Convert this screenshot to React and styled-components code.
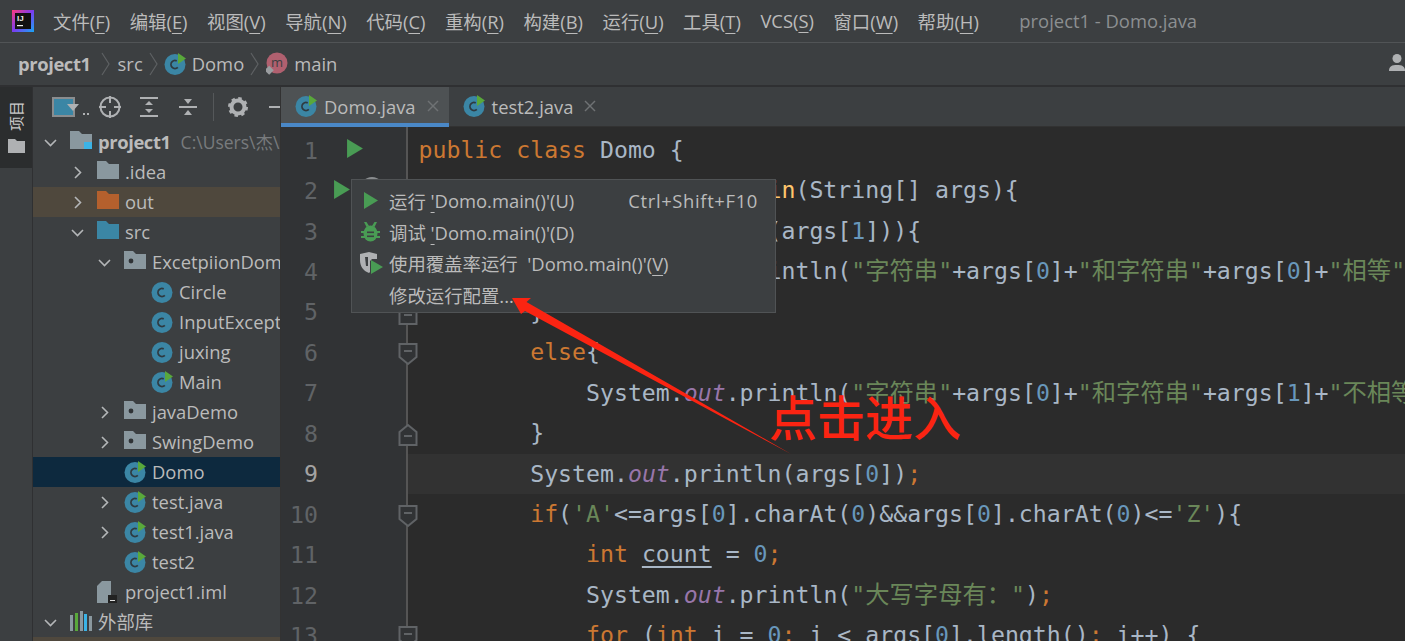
import React from "react";
import styled, { createGlobalStyle } from "styled-components";

const Global = createGlobalStyle`
  html, body { margin: 0; padding: 0; background: #3c3f41; overflow: hidden; }
  * { box-sizing: border-box; }
`;
const UI = `"Open Sans", "Noto Sans CJK SC", sans-serif`;
const MONO = `"DejaVu Sans Mono", "Noto Sans CJK SC", monospace`;

const Page = styled.div`
  width: 1405px; height: 641px; position: relative; overflow: hidden;
  display: flex; flex-direction: column; background: #3c3f41; color: #bbbbbb;
  font-family: ${UI}; font-size: 18.4px;
`;
const MenuBar = styled.div`
  height: 43px; flex: none; display: flex; align-items: center; padding: 0 0 1px 12px;
  border-bottom: 1px solid #515456;
`;
const LogoSlot = styled.div`width: 22px; height: 22px; margin-right: 19px; flex: none; display: flex;`;
const MenuEntry = styled.span`margin-right: 19.5px; white-space: pre;`;
const Title = styled.span`margin-left: 21px; color: #8c8f91; white-space: pre;`;
const Crumbs = styled.div`
  height: 44px; flex: none; display: flex; align-items: center; padding: 0 0 1px 18px;
  border-bottom: 2px solid #2f3032; position: relative;
`;
const Crumb = styled.span`font-weight: ${p => (p.$bold ? 700 : 400)}; letter-spacing: ${p => (p.$bold ? "-0.4px" : 0)}; white-space: pre;`;
const CrumbSep = styled.svg`width: 9px; height: 24px; flex: none; margin-left: ${p => p.$l}px; margin-right: ${p => p.$r}px;`;
const CrumbIcon = styled.span`display: flex; margin-right: 6px;`;
const UserIcon = styled.svg`position: absolute; right: -4px; top: 10px; width: 20px; height: 20px;`;
const Body = styled.div`flex: 1; display: flex; min-height: 0;`;
const Stripe = styled.div`width: 33px; flex: none; border-right: 1px solid #2f3032;`;
const StripeButton = styled.div`
  height: 81px; width: 32px; background: #2b2d2e; display: flex; flex-direction: column;
  align-items: center; padding-top: 14px; gap: 8px;
`;
const StripeLabel = styled.span`
  writing-mode: vertical-rl; text-orientation: sideways; transform: rotate(180deg);
  font-size: 15px; line-height: 16px; color: #c9c9c9;
`;
const Panel = styled.div`
  width: 248px; flex: none; display: flex; flex-direction: column; border-right: 1px solid #323232;
`;
const PanelTools = styled.div`height: 40px; flex: none; display: flex; align-items: center; padding-left: 19px; overflow: hidden;`;
const ToolIcon = styled.svg`flex: none; margin-right: ${p => p.$mr || 0}px;`;
const ToolSep = styled.div`width: 1px; height: 28px; background: #55585a; flex: none; margin: 0 14px 0 16px;`;
const Tree = styled.div`flex: 1; overflow: hidden;`;
const Row = styled.div`
  height: 30px; display: flex; align-items: center; white-space: nowrap; overflow: hidden;
  padding-left: ${p => 4 + p.$level * 27}px;
  background: ${p => (p.$selected ? "#0d293e" : p.$tint ? "#4f483d" : "transparent")};
`;
const ChevronSlot = styled.span`width: 33px; height: 30px; flex: none; display: flex; align-items: center; padding-left: 7px;`;
const IconSlot = styled.span`width: 28px; height: 22px; flex: none; display: flex;`;
const RowName = styled.span`font-weight: ${p => (p.$bold ? 700 : 400)}; letter-spacing: ${p => (p.$bold ? "-0.4px" : 0)}; white-space: pre; margin-bottom: 2px;`;
const RowHint = styled.span`color: #787b7d; margin-left: 10px; white-space: pre; font-size: 17.5px; margin-bottom: 2px;`;
const Editor = styled.div`flex: 1; min-width: 0; display: flex; flex-direction: column;`;
const Tabs = styled.div`height: 40px; flex: none; display: flex; background: #3c3f41; border-bottom: 1px solid #323232;`;
const Tab = styled.div`
  height: 40px; display: flex; align-items: center; padding: 2px 9px 0 14px; white-space: pre;
  background: ${p => (p.$active ? "#4e5254" : "transparent")};
  border-bottom: 4px solid ${p => (p.$active ? "#4a88c7" : "transparent")};
`;
const TabIcon = styled.span`display: flex; margin-right: 7px;`;
const TabClose = styled.svg`width: 14px; height: 14px; margin-left: 10px; flex: none;`;
const Code = styled.div`flex: 1; display: flex; background: #2b2b2b; overflow: hidden; padding-top: 3px; position: relative;
  font-family: ${MONO}; font-size: 23.2px;`;
const Gutter = styled.div`
  width: 127px; flex: none; background: #313335; margin-top: -3px; padding-top: 3px;
  border-right: 2px solid #555555; height: calc(100% + 3px);
`;
const GutterRow = styled.div`height: 40.45px; display: flex; align-items: center;`;
const LineNo = styled.span`width: 37px; flex: none; text-align: right; color: ${p => (p.$current ? "#a4a3a3" : "#606366")};`;
const RunCell = styled.span`width: 80px; flex: none; display: flex; align-items: center; padding-left: ${p => p.$pad || 0}px; padding-bottom: 3px;`;
const OverrideMark = styled.svg`width: 24px; height: 24px; flex: none; margin-left: 10px;`;
const FoldMark = styled.svg`width: 20px; height: 24px; flex: none; margin-top: 4px; position: relative; z-index: 1;`;
const Lines = styled.div`flex: 1; min-width: 0; white-space: pre;`;
const Line = styled.div`
  height: 40.45px; line-height: 40.45px; padding-left: 10.5px; color: #a9b7c6;
  background: ${p => (p.$current ? "#323232" : "transparent")};
`;
const K = styled.span`color: #cc7832;`;
const S = styled.span`color: #6a8759;`;
const Han = styled.span`font-size: 24.3px;`;
const N = styled.span`color: #6897bb;`;
const F = styled.span`color: #9876aa; font-style: italic;`;
const M = styled.span`color: #ffc66d;`;
const Und = styled.span`text-decoration: underline; text-underline-offset: 4px;`;
const Popup = styled.div`
  position: absolute; left: 351px; top: 179px; width: 425px; height: 134px; z-index: 3;
  background: #3c3f41; border: 1.5px solid #505355; padding-top: 5px;
`;
const PopupItem = styled.div`height: 31.4px; display: flex; align-items: center; white-space: pre; color: #bbbbbb; padding-right: 17px;`;
const PopupIcon = styled.span`width: 37px; flex: none; display: flex; justify-content: center;`;
const Shortcut = styled.span`margin-left: auto; letter-spacing: 0.65px;`;
const ArrowLayer = styled.svg`position: absolute; left: 0; top: 0; width: 1405px; height: 641px; z-index: 4; pointer-events: none;`;
const Note = styled.div`
  position: absolute; left: 769px; top: 381px; z-index: 5; color: #fb2412; white-space: pre;
  font-family: "Noto Sans CJK SC", sans-serif; font-weight: 500; font-size: 48px; line-height: 68px;
`;

const ClassIcon = ({ play, size = 22 }) => (
  <svg width={size} height={size} viewBox="0 0 22 22">
    <circle cx="11" cy="11.5" r="10.5" fill="#3b86a5" />
    <circle cx="11" cy="11.5" r="4" fill="none" stroke="#2f3a40" strokeWidth="1.8" strokeDasharray="17 8" transform="rotate(45 11 11.5)" />
    {play && <polygon points="14,0 22,5.5 14,11" fill="#59a83b" />}
  </svg>
);
const Chevron = ({ open }) => (
  <svg width="13" height="13" viewBox="0 0 13 13" fill="none" stroke="#b4b6b8" strokeWidth="1.6">
    {open ? <polyline points="1,4 6.5,9.5 12,4" /> : <polyline points="4,1 9.5,6.5 4,12" />}
  </svg>
);
const Folder = ({ color = "#8a989f", badge, pkg }) => (
  <svg width="22" height="18" viewBox="0 0 22 18">
    <path d="M0 0h9l3 3h10v15H0z" fill={color} />
    {pkg && <circle cx="7" cy="10" r="2.4" fill="#2f3336" />}
    {badge && <rect x="14" y="11" width="9" height="9" fill="#3bb3e6" />}
  </svg>
);
const Play = ({ size = 18 }) => (
  <svg width={size - 3} height={size} viewBox="0 0 15 18"><polygon points="0,0 15,9 0,18" fill="#499c54" /></svg>
);
const Bug = () => (
  <svg width="19" height="20" viewBox="0 0 19 20" fill="#499c54">
    <ellipse cx="9.5" cy="11.5" rx="7" ry="8" />
    <rect x="0" y="9" width="19" height="2" /><rect x="0" y="14" width="19" height="2" />
    <polygon points="3,0 5.5,0 8,4 5.5,5" /><polygon points="16,0 13.5,0 11,4 13.5,5" />
    <rect x="6" y="9.5" width="7" height="1.6" fill="#3c3f41" /><rect x="6" y="13.5" width="7" height="1.6" fill="#3c3f41" />
  </svg>
);
const Coverage = () => (
  <svg width="24" height="24" viewBox="0 0 24 24">
    <path d="M1 3l9-2 8 2v5h-5l-2 2v11l-1 1C4 20 1 15 1 9z" fill="#afb1b3" />
    <path d="M6 6h3v9H7z" fill="#3c3f41" />
    <polygon points="12,9 24,16 12,23" fill="#499c54" />
  </svg>
);

const Fold = ({ kind }) => (
  <FoldMark viewBox="0 0 20 24">
    {kind === "down" && <path d="M1.5 2h17v13l-8.5 7-8.5-7z" fill="#313335" stroke="#606366" strokeWidth="2" />}
    {kind === "up" && <path d="M1.5 22h17V9L10 2 1.5 9z" fill="#313335" stroke="#606366" strokeWidth="2" />}
    <rect x="6" y={kind === "up" ? 12 : 8} width="8" height="2" fill="#606366" />
  </FoldMark>
);

const U = ({ children }) => <Und>{children}</Und>;
const Str = ({ t }) => <S>"<Han>{t}</Han>"</S>;
const menus = [["文件(", "F", ")"], ["编辑(", "E", ")"], ["视图(", "V", ")"], ["导航(", "N", ")"], ["代码(", "C", ")"], ["重构(", "R", ")"], ["构建(", "B", ")"], ["运行(", "U", ")"], ["工具(", "T", ")"], ["VCS(", "S", ")"], ["窗口(", "W", ")"], ["帮助(", "H", ")"]];

const rows = [
  { l: 0, open: true, icon: <Folder badge />, name: "project1", bold: true, hint: "C:\\Users\\杰\\Desktop" },
  { l: 1, closed: true, icon: <Folder />, name: ".idea" },
  { l: 1, closed: true, icon: <Folder color="#b4602d" />, name: "out", tint: true },
  { l: 1, open: true, icon: <Folder color="#3b86a5" />, name: "src" },
  { l: 2, open: true, icon: <Folder pkg />, name: "ExcetpiionDomo" },
  { l: 3, icon: <ClassIcon />, name: "Circle" },
  { l: 3, icon: <ClassIcon />, name: "InputException" },
  { l: 3, icon: <ClassIcon />, name: "juxing" },
  { l: 3, icon: <ClassIcon play />, name: "Main" },
  { l: 2, closed: true, icon: <Folder pkg />, name: "javaDemo" },
  { l: 2, closed: true, icon: <Folder pkg />, name: "SwingDemo" },
  { l: 2, icon: <ClassIcon play />, name: "Domo", selected: true },
  { l: 2, closed: true, icon: <ClassIcon play />, name: "test.java" },
  { l: 2, closed: true, icon: <ClassIcon play />, name: "test1.java" },
  { l: 2, icon: <ClassIcon play />, name: "test2" },
  { l: 1, icon: (
      <svg width="20" height="22" viewBox="0 0 20 22"><path d="M0 5l5-5h9v22H0z" fill="#8a989f" /><rect x="11" y="14" width="9" height="8" fill="#222" /><rect x="13" y="19" width="5" height="1" fill="#ddd" /></svg>
    ), name: "project1.iml" },
  { l: 0, open: true, icon: (
      <svg width="22" height="20" viewBox="0 0 22 20"><rect x="0" y="4" width="3" height="16" fill="#8a989f" /><rect x="5" y="2" width="3" height="18" fill="#59a83b" /><rect x="10" y="0" width="3" height="20" fill="#8a989f" /><rect x="14" y="3" width="3" height="17" fill="#3bb3e6" /><rect x="19" y="5" width="3" height="15" fill="#8a989f" /></svg>
    ), name: "外部库" },
];

const code = [
  <><K>public class </K>Domo {"{"}</>,
  <>{"    "}<K>public static void </K><M>main</M>(String[] args){"{"}</>,
  <>{"        "}<K>if</K>(args[<N>0</N>].equals(args[<N>1</N>])){"{"}</>,
  <>{"            "}System.<F>out</F>.println(<Str t="字符串" />+args[<N>0</N>]+<Str t="和字符串" />+args[<N>0</N>]+<Str t="相等" />)<K>;</K></>,
  <>{"        }"}</>,
  <>{"        "}<K>else</K>{"{"}</>,
  <>{"            "}System.<F>out</F>.println(<Str t="字符串" />+args[<N>0</N>]+<Str t="和字符串" />+args[<N>1</N>]+<Str t="不相等" />)<K>;</K></>,
  <>{"        }"}</>,
  <>{"        "}System.<F>out</F>.println(args[<N>0</N>])<K>;</K></>,
  <>{"        "}<K>if</K>(<S>'A'</S>{"<="}args[<N>0</N>].charAt(<N>0</N>)&&args[<N>0</N>].charAt(<N>0</N>){"<="}<S>'Z'</S>){"{"}</>,
  <>{"            "}<K>int </K><Und>count</Und> = <N>0</N><K>;</K></>,
  <>{"            "}System.<F>out</F>.println(<Str t="大写字母有：" />)<K>;</K></>,
  <>{"            "}<K>for </K>(<K>int </K>i = <N>0</N><K>; </K>i {"<"} args[<N>0</N>].length()<K>; </K>i++) {"{"}</>,
];
const folds = { 2: "down", 3: "down", 5: "up", 6: "down", 8: "up", 10: "down", 13: "down" };

const Sep = ({ l, r }) => (
  <CrumbSep $l={l} $r={r} viewBox="0 0 9 24" fill="none" stroke="#5e6163" strokeWidth="1.2"><polyline points="1,1 8,12 1,23" /></CrumbSep>
);
const Close = () => (
  <TabClose viewBox="0 0 14 14" stroke="#6f7274" strokeWidth="1.4"><line x1="2" y1="2" x2="12" y2="12" /><line x1="12" y1="2" x2="2" y2="12" /></TabClose>
);

export default function App() {
  return (
    <Page>
      <Global />
      <MenuBar>
        <LogoSlot>
          <svg width="22" height="22" viewBox="0 0 22 22">
            <defs><linearGradient id="lg" x1="0" y1="0" x2="1" y2="1"><stop offset="0" stopColor="#ff3a7c" /><stop offset="0.5" stopColor="#7a3cf0" /><stop offset="1" stopColor="#17a8f5" /></linearGradient></defs>
            <rect width="22" height="22" fill="url(#lg)" />
            <rect x="3" y="3" width="16" height="16" fill="#111" />
            <text x="5" y="11" fontSize="8" fontWeight="700" fill="#eee" fontFamily="Liberation Sans">IJ</text>
            <rect x="5" y="15" width="6" height="1.2" fill="#eee" />
          </svg>
        </LogoSlot>
        {menus.map((m, i) => <MenuEntry key={i}>{m[0]}<U>{m[1]}</U>{m[2]}</MenuEntry>)}
        <Title>project1 - Domo.java</Title>
      </MenuBar>
      <Crumbs>
        <Crumb $bold>project1</Crumb><Sep l={10} r={8} />
        <Crumb>src</Crumb><Sep l={6} r={6} />
        <CrumbIcon><ClassIcon play /></CrumbIcon><Crumb>Domo</Crumb><Sep l={6} r={7} />
        <CrumbIcon>
          <svg width="22" height="24" viewBox="0 0 22 24">
            <circle cx="11" cy="11" r="10.5" fill="#b0606f" />
            <text x="11" y="15" textAnchor="middle" fontSize="13" fill="#3c3f41" fontFamily="Open Sans">m</text>
            <rect x="0" y="15" width="6.5" height="6.5" fill="#9a9da0" transform="rotate(45 3.2 18.2)" />
          </svg>
        </CrumbIcon>
        <Crumb>main</Crumb>
        <UserIcon viewBox="0 0 20 20" fill="#afb1b3"><circle cx="8" cy="5.5" r="4.5" /><path d="M0 18c0-5 3-6 8-6s8 1 8 6z" /></UserIcon>
      </Crumbs>
      <Body>
        <Stripe>
          <StripeButton>
            <StripeLabel>项目</StripeLabel>
            <svg width="17" height="14" viewBox="0 0 17 14"><path d="M0 0h7l2 2h8v12H0z" fill="#afb1b3" /></svg>
          </StripeButton>
        </Stripe>
        <Panel>
          <PanelTools>
            <ToolIcon $mr={8} width="39" height="22" viewBox="0 0 39 22">
              <rect x="1" y="2" width="21" height="18" fill="#3b86a5" stroke="#8a8d8f" strokeWidth="2" />
              <polygon points="15,8 27,8 21,15" fill="#afb1b3" />
              <rect x="31" y="17" width="2" height="2" fill="#afb1b3" /><rect x="35" y="17" width="2" height="2" fill="#afb1b3" />
            </ToolIcon>
            <ToolIcon $mr={19} width="22" height="22" viewBox="0 0 22 22" fill="none" stroke="#afb1b3" strokeWidth="2">
              <circle cx="11" cy="11" r="9.5" /><line x1="11" y1="0" x2="11" y2="7" /><line x1="11" y1="15" x2="11" y2="22" /><line x1="0" y1="11" x2="7" y2="11" /><line x1="15" y1="11" x2="22" y2="11" />
            </ToolIcon>
            <ToolIcon $mr={21} width="18" height="22" viewBox="0 0 18 22" fill="#afb1b3">
              <rect width="18" height="2" y="1" /><rect width="18" height="2" y="19" /><polygon points="9,5 13,9 5,9" /><polygon points="9,17 13,13 5,13" />
            </ToolIcon>
            <ToolIcon width="18" height="22" viewBox="0 0 18 22" fill="#afb1b3">
              <rect width="18" height="2" y="10" /><polygon points="9,8 13,3 5,3" /><polygon points="9,14 13,19 5,19" />
            </ToolIcon>
            <ToolSep />
            <ToolIcon $mr={21} width="20" height="20" viewBox="0 0 20 20">
              <circle cx="10" cy="10" r="6.5" fill="none" stroke="#afb1b3" strokeWidth="4" />
              <circle cx="10" cy="10" r="8.7" fill="none" stroke="#afb1b3" strokeWidth="2.6" strokeDasharray="3.4 3.43" />
            </ToolIcon>
            <ToolIcon width="12" height="4" viewBox="0 0 12 4" fill="#afb1b3"><rect width="12" height="2" y="1" /></ToolIcon>
          </PanelTools>
          <Tree>
            {rows.map((r, i) => (
              <Row key={i} $level={r.l} $selected={r.selected} $tint={r.tint}>
                <ChevronSlot>{r.open && <Chevron open />}{r.closed && <Chevron />}</ChevronSlot>
                <IconSlot>{r.icon}</IconSlot>
                <RowName $bold={r.bold}>{r.name}</RowName>
                {r.hint && <RowHint>{r.hint}</RowHint>}
              </Row>
            ))}
            <Row $level={0} $tint />
          </Tree>
        </Panel>
        <Editor>
          <Tabs>
            <Tab $active><TabIcon><ClassIcon play /></TabIcon>Domo.java<Close /></Tab>
            <Tab><TabIcon><ClassIcon play /></TabIcon>test2.java<Close /></Tab>
          </Tabs>
          <Code>
            <Gutter>
              {code.map((_, i) => (
                <GutterRow key={i}>
                  <LineNo $current={i === 8}>{i + 1}</LineNo>
                  <RunCell $pad={i === 0 ? 29 : i === 1 ? 16 : 0}>
                    {i < 2 && <Play size={19} />}
                    {i === 1 && (
                      <OverrideMark viewBox="0 0 24 24" fill="none" stroke="#8a8d8f" strokeWidth="2"><circle cx="12" cy="12" r="11" /></OverrideMark>
                    )}
                  </RunCell>
                  {folds[i + 1] && <Fold kind={folds[i + 1]} />}
                </GutterRow>
              ))}
            </Gutter>
            <Lines>
              {code.map((c, i) => <Line key={i} $current={i === 8}>{c}</Line>)}
            </Lines>
          </Code>
        </Editor>
      </Body>
      <Popup>
        <PopupItem><PopupIcon><Play size={17} /></PopupIcon>运行 <U>'</U>Domo.main()'(U)<Shortcut>Ctrl+Shift+F10</Shortcut></PopupItem>
        <PopupItem><PopupIcon><Bug /></PopupIcon>调试 <U>'</U>Domo.main()'(D)</PopupItem>
        <PopupItem><PopupIcon><Coverage /></PopupIcon>使用覆盖率运行  'Domo.main()'(<U>V</U>)</PopupItem>
        <PopupItem><PopupIcon />修改运行配置...</PopupItem>
      </Popup>
      <ArrowLayer viewBox="0 0 1405 641">
        <polygon points="512,298 531,298 526.5,302 791,454 525,311 521,314" fill="#fb2412" />
      </ArrowLayer>
      <Note>点击进入</Note>
    </Page>
  );
}
